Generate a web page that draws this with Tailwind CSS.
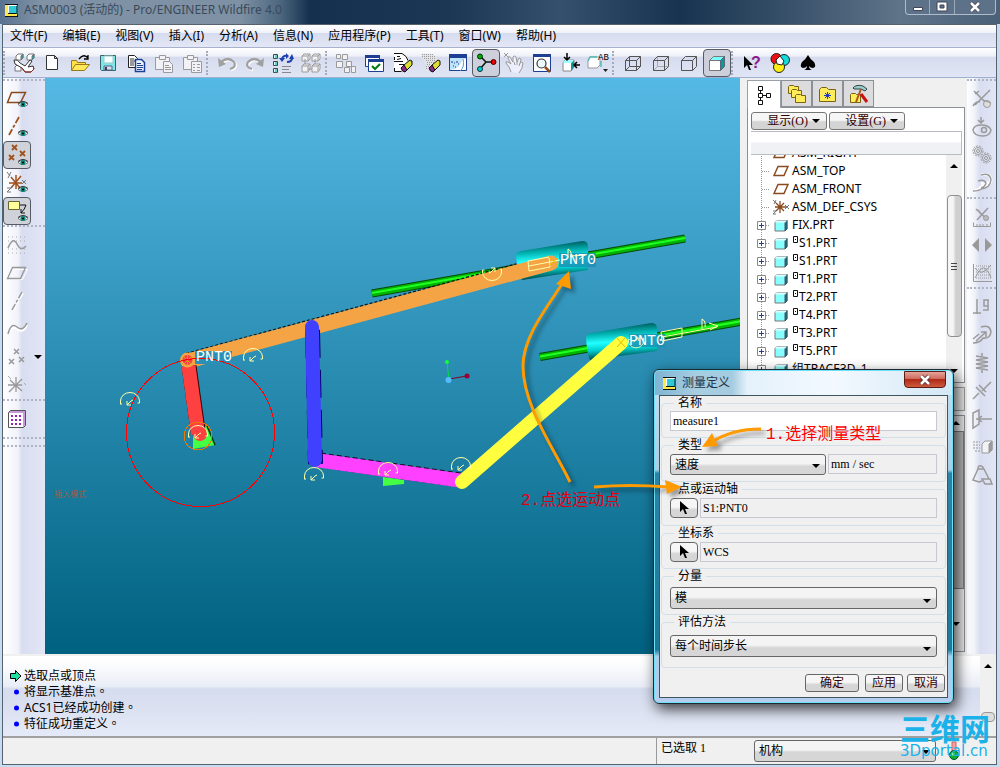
<!DOCTYPE html>
<html lang="zh-CN">
<head>
    <meta charset="UTF-8">
    <title>ASM0003 (活动的) - Pro/ENGINEER Wildfire 4.0</title>
    <meta name="viewport" content="width=device-width, initial-scale=1.0">
    <script src="https://cdn.jsdelivr.net/npm/@tailwindcss/browser@4"></script>
</head>
<body class="relative h-screen overflow-hidden flex flex-col bg-[#c6dcf0] text-xs text-black font-['Noto_Sans','Noto_Sans_CJK_TC',sans-serif]">

    <!-- 共用图形 -->
    <svg class="hidden">
        <defs>
            <symbol id="eye" viewBox="0 0 12 8">
                <path d="M1 4Q6-1 11 4Q6 8 1 4z" fill="#fff" stroke="#777"/>
                <path d="M1 3Q6-1 11 3" fill="none" stroke="#333"/>
                <circle cx="6" cy="4" r="2.6" fill="#0a8a80"/><circle cx="6" cy="4" r="1" fill="#000"/>
            </symbol>
            <symbol id="logo" viewBox="0 0 13 13">
                <path d="M0 0h13v13H0z" fill="#111"/><path d="M0 1h3v11H0zM1 10h11v2H1z" fill="#ffe94a"/>
                <path d="M3 1h9v8H3z" fill="#fff"/><path d="M4 2h7v7H4z" fill="#2fc9d6"/><path d="M11 2l2-1v10l-2-2z" fill="#0b6f7c"/>
            </symbol>
            <symbol id="cube" viewBox="0 0 14 13">
                <path d="M1 3.500l2-2h10v8.500l-2 2H1z" fill="#8ff" stroke="#777"/>
                <path d="M11 3.500l2-2v8.500l-2 2z" fill="#078" stroke="#456"/>
                <path d="M1 3.500l2-2h10l-2 2z" fill="#dff"/>
            </symbol>
            <symbol id="plane" viewBox="0 0 16 12"><path d="M5 1.500h10l-4 9H1z" fill="none" stroke="#8b4a1e" stroke-width="1.500"/></symbol>
            <symbol id="csys" viewBox="0 0 18 16">
                <path d="M3 8h11M8 2v12M4 4l8 8M12 4l-8 8" stroke="#8b4a1e" stroke-width="1.300"/>
                <path d="M1 1l3 3M4 1L2 5M13 6l4 4M17 6l-4 4M1 12h3l-3 3h3" stroke="#777" fill="none"/>
            </symbol>
            <symbol id="plus" viewBox="0 0 9 9"><path d="M.5.5h8v8h-8z" fill="#fff" stroke="#888"/><path d="M2 4.500h5M4.500 2v5" stroke="#25408c"/></symbol>
            <symbol id="down" viewBox="0 0 8 5"><path d="M0 0h8L4 4z" fill="#000"/></symbol>
            <symbol id="cursor" viewBox="0 0 10 14"><path d="M1 0v11l3-3 2 5h2l-2-5h4z" fill="#000"/></symbol>
            <g id="pin" fill="none" stroke="#ffffa8">
                <path d="M-10 3h2M-9.500 3V0A9.500 8.500 0 0 1 9.500 0V2h-2M-3 0v4h4M-3 4l4-4l2-1"/>
            </g>
        </defs>
    </svg>

    <!-- 标题栏 -->
    <header class="h-6 shrink-0 flex items-start pl-[5px] pr-1 bg-[linear-gradient(90deg,#587391_0%,#8093a6_4%,#7e91a4_24%,#4d6780_28%,#15304e_31%,#1c3754_45%,#35506c_56%,#17334f_68%,#3c546d_80%,#5f7489_90%,#4b6178_100%)]">
        <svg class="w-[13px] h-[13px] mt-1"><use href="#logo"/></svg>
        <h1 class="ml-1.5 leading-5 text-[12px] text-[#3a4a5a] whitespace-nowrap">ASM0003 (活动的) - Pro/ENGINEER Wildfire 4.0</h1>
        <div class="ml-auto flex h-[15px] border border-t-0 border-[#aebccb] rounded-b divide-x divide-[#9aaabb] bg-[#5d7188]">
            <button class="w-6 grid place-items-center" aria-label="最小化"><svg class="w-3 h-3"><path d="M1.500 6.500h9v3h-9z" fill="#fff" stroke="#445"/></svg></button>
            <button class="w-[25px] grid place-items-center" aria-label="最大化"><svg class="w-3 h-3"><path d="M1 1h10v9H1zM4 4v3h4V4z" fill="#fff" fill-rule="evenodd" stroke="#445"/></svg></button>
            <button class="w-10 grid place-items-center" aria-label="关闭"><svg class="w-3 h-3"><path d="M2 2l8 8M10 2l-8 8" stroke="#445" stroke-width="4"/><path d="M2 2l8 8M10 2l-8 8" stroke="#fff" stroke-width="2.500"/></svg></button>
        </div>
    </header>

    <div class="flex-1 min-h-0 mb-0.5 ml-0.5 mr-[3px] flex flex-col border border-[#56636f] bg-[#f0f0f0]">

        <!-- 菜单 -->
        <nav class="h-[23px] shrink-0 flex items-center gap-[15px] pl-[7px] border-b border-[#a9b2cc] bg-[linear-gradient(180deg,#fff_0%,#f1f3fa_34%,#d6dbee_36%,#e3e7f6_100%)] whitespace-nowrap">
            <button>文件(F)</button>
            <button>编辑(E)</button>
            <button>视图(V)</button>
            <button>插入(I)</button>
            <button>分析(A)</button>
            <button>信息(N)</button>
            <button>应用程序(P)</button>
            <button>工具(T)</button>
            <button>窗口(W)</button>
            <button>帮助(H)</button>
        </nav>

        <!-- 工具栏 -->
        <div class="h-[30px] shrink-0 flex items-center border-b border-[#9fb0cf] bg-[linear-gradient(180deg,#fff_0%,#eef0f8_28%,#d6dbee_32%,#e1e6f6_100%)]">
            <i class="w-[7px] h-6 border-l-2 border-dotted border-[#a5abbc]"></i>
            <button class="w-7 h-7 grid place-items-center" aria-label="选取"><svg class="w-6 h-6" fill="#fff" stroke="#777"><path d="M4 5l2-2h5v4l-2 2H4z"/><path d="M9 5v4l2-2V3z" fill="#0aa"/><path d="M15 5l2-2h5v4l-2 2h-5z"/><path d="M20 5v4l2-2V3z" fill="#0aa"/><path d="M3 16l2-2h4v6H3z"/><path d="M2 9q4-1 6 3l5 3 5-6 2 1-4 6 5-1 1 3-3 3h-6l-3-4-7-4z" stroke="#333"/><path d="M10 17l3 4h6l3-3-1-3" fill="none" stroke="#922"/></svg></button>
            <button class="w-7 h-7 grid place-items-center" aria-label="新建"><svg class="w-6 h-6"><path d="M6.500 4.500h8l3 3v11h-11zM14.500 4.500v3h3" fill="#fff" stroke="#333"/></svg></button>
            <button class="w-7 h-7 grid place-items-center" aria-label="打开"><svg class="w-6 h-6"><path d="M3.500 19V9.500h5l1 2h8V14" fill="#ffe04a" stroke="#997a1a"/><path d="M3.500 19.500l4-6h14l-5 6z" fill="#ffe85a" stroke="#997a1a"/><path d="M11 8q5-6 9-1M20 4v4h-4" fill="none" stroke="#000" stroke-width="1.300"/></svg></button>
            <button class="w-7 h-7 grid place-items-center" aria-label="保存"><svg class="w-6 h-6"><path d="M4.500 4.500h15v15h-14l-1-1z" fill="#7ee6ea" stroke="#3b6468"/><path d="M8 5h9v7H8z" fill="#f4ffff" stroke="#9cc"/><path d="M8 15h8v4H8z" fill="#dde" stroke="#568"/><path d="M9 16h2v3H9z" fill="#345"/></svg></button>
            <button class="w-7 h-7 grid place-items-center" aria-label="复制"><svg class="w-6 h-6"><path d="M4.500 4.500h6l3 3v9h-9z" fill="#fff" stroke="#222"/><path d="M6 8h4M6 10h5M6 12h4M6 14h4" stroke="#333"/><path d="M11.500 8.500h6l3 3v9h-9z" fill="#eef4ff" stroke="#1c3f94" stroke-width="1.500"/><path d="M13 12.500h4M13 14.500h6M13 16.500h6M13 18.500h5" stroke="#1c3f94"/></svg></button>
            <button class="w-7 h-7 grid place-items-center" aria-label="粘贴"><svg class="w-6 h-6" fill="#f2f2f6" stroke="#9a9a9a"><path d="M3.500 6.500h14v12h-14z"/><path d="M7.500 4.500h6v4h-6z"/><path d="M11.500 10.500h6l3 3v8h-9z"/><path d="M13 14.500h4M13 16.500h6M13 18.500h6"/></svg></button>
            <button class="w-7 h-7 grid place-items-center" aria-label="选择性粘贴"><svg class="w-6 h-6" fill="#f2f2f6" stroke="#9a9a9a"><path d="M3.500 6.500h14v12h-14z"/><path d="M7.500 4.500h6v4h-6z"/><path d="M11.500 10.500h10v11h-10z"/><path d="M13 13.500h2M17 13.500h3M13 16.500h2M17 16.500h3M13 19.500h2M17 19.500h3"/></svg></button>
            <i class="w-[7px] h-6 border-l-2 border-dotted border-[#a5abbc]"></i>
            <button class="w-7 h-7 grid place-items-center" aria-label="撤消"><svg class="w-6 h-6"><path d="M6 11q7-6 13 0q3 5-4 7" fill="none" stroke="#fff" stroke-width="2.500" transform="translate(1 1)"/><path d="M6 11q7-6 13 0q3 5-4 7" fill="none" stroke="#a0a0a0" stroke-width="2.200"/><path d="M3 7l1 9 7-3z" fill="#a0a0a0"/></svg></button>
            <button class="w-7 h-7 grid place-items-center" aria-label="重做"><svg class="w-6 h-6"><path d="M18 11q-7-6-13 0q-3 5 4 7" fill="none" stroke="#fff" stroke-width="2.500" transform="translate(1 1)"/><path d="M18 11q-7-6-13 0q-3 5 4 7" fill="none" stroke="#a0a0a0" stroke-width="2.200"/><path d="M21 7l-1 9-7-3z" fill="#a0a0a0"/></svg></button>
            <button class="w-7 h-7 grid place-items-center" aria-label="再生"><svg class="w-6 h-6"><path d="M2.500 3.500h4v4h-4zM2.500 10.500h4v4h-4zM2.500 17.500h4v4h-4z" fill="#cff" stroke="#444"/><path d="M5 4v4M5 11v4M5 18v4" stroke="#0a9a8a"/><path d="M11 8q1-4 5-3M21 7q0 4-5 4" fill="none" stroke="#1c3fb4" stroke-width="2"/><path d="M8 7h6l-3 4zM18 8h5l-2-5zM15 2l3 3-3 3z" fill="#1c3fb4"/><path d="M11 15.500h9M11 18.500h7M11 21.500h9" stroke="#888"/></svg></button>
            <button class="w-7 h-7 grid place-items-center" aria-label="再生管理器"><svg class="w-6 h-6" fill="#f2f2f6" stroke="#9a9a9a"><path d="M3 5l2-2h6v5l-2 2H3zM13 5l2-2h6v5l-2 2h-6zM3 15l2-2h6v5l-2 3H3zM13 15l2-2h6v5l-2 3h-6z"/><path d="M3 5h6v5M9 5l2-2M13 5h6v5M19 5l2-2M3 15h6v5M9 15l2-2M13 15h6v5M19 15l2-2M6 8v5M16 8v5M9 18h4" fill="none"/></svg></button>
            <i class="w-[7px] h-6 border-l-2 border-dotted border-[#a5abbc]"></i>
            <button class="w-7 h-7 grid place-items-center" aria-label="查找"><svg class="w-6 h-6" fill="#f2f2f6" stroke="#9a9a9a"><path d="M2.500 3.500h4v4h-4zM8.500 3.500h5v5h-5zM2.500 10.500h6v6h-6zM12.500 10.500h5v5h-5zM10.500 16.500h5v5h-5zM17.500 15.500h4v6h-4z"/></svg></button>
            <button class="w-7 h-7 grid place-items-center" aria-label="窗口激活"><svg class="w-6 h-6"><path d="M3.500 4.500h14v11h-14z" fill="#fff" stroke="#1c3f94"/><path d="M3 4h15v3H3z" fill="#1c3f94"/><path d="M6.500 8.500h15v12h-15z" fill="#fff" stroke="#1c3f94"/><path d="M6 8h16v3H6z" fill="#1c3f94"/><path d="M10 15l3 3 5-5" fill="none" stroke="#0a7a1a" stroke-width="2.200"/></svg></button>
            <button class="w-7 h-7 grid place-items-center" aria-label="重画"><svg class="w-6 h-6"><path d="M4 2h9l4 4v4L11 21H4z" fill="#fff"/><path d="M4 2.500h8l4 3 2 4M4.500 9v-3M4.500 17v3.500h7M7 5.500h3M7 8.500l4-1M4 10.500h9M9 13.500h5" fill="none" stroke="#111"/><path d="M11 17l3-3 4 4-3 3q-3 0-4-4z" fill="#8a2a8a" stroke="#111"/><path d="M14 14l6-5 2 1v4l-5 5z" fill="#dd3" stroke="#111"/><path d="M20 9l2 1v3z" fill="#262"/></svg></button>
            <button class="w-7 h-7 grid place-items-center" aria-label="清除"><svg class="w-6 h-6"><path d="M3 3h12l4 5v2L9 21H7l1-6z" fill="#e4e4e8"/><path d="M4 3.500h11M4 5.500h13M6 7.500h12M8 9.500h10M9 11.500h7M9 13.500h4M8 15.500h3M8 17.500h2" stroke="#999" stroke-dasharray="1 1"/><path d="M11 17l3-3 4 4-3 3q-3 0-4-4z" fill="#8a2a8a" stroke="#111"/><path d="M14 14l6-5 2 1v4l-5 5z" fill="#dd3" stroke="#111"/></svg></button>
            <button class="w-7 h-7 grid place-items-center" aria-label="旋转中心"><svg class="w-6 h-6"><path d="M3.500 3.500h17v16h-17z" fill="#bfe4fa" stroke="#1c3f94"/><path d="M3 3h18v4H3z" fill="#1c3f94"/><path d="M4 19Q13 19 17 8h3v11z" fill="#fff"/><path d="M5 11h2M8 12h1M10 11h2M7 15h1M12 13h1M9 16h1" stroke="#1c3f94"/><path d="M14 20q5-4 3-12" fill="none" stroke="#59c"/></svg></button>
            <button class="w-7 h-7 grid place-items-center border border-[#555a66] rounded bg-[#cdd0da]" aria-label="方向模式"><svg class="w-6 h-6"><path d="M6 5l6 6h8M12 11l-6 7" fill="none" stroke="#111" stroke-width="1.500"/><circle cx="6" cy="5.500" r="2.500" fill="#0a0" stroke="#031"/><circle cx="19.500" cy="11" r="2.500" fill="#e00" stroke="#400"/><circle cx="6" cy="18" r="2.500" fill="#0cc" stroke="#033"/></svg></button>
            <button class="w-7 h-7 grid place-items-center" aria-label="拖动"><svg class="w-6 h-6" stroke="#9a9a9a" fill="#eef"><path d="M2 2l4 4M6 2L2 6"/><path d="M9 21l-2-5-3-4q-1-2 2-1l3 2-3-6q0-2 2-1l3 5 0-5q1-2 3 0l1 5 2-4q2 0 2 2l-1 3q2-2 3 0l-1 5-3 5"/><path d="M12 11l1 3M15 11v3M18 12l-1 3"/></svg></button>
            <button class="w-7 h-7 grid place-items-center" aria-label="放大"><svg class="w-6 h-6"><path d="M3.500 3.500h17v17h-17z" fill="#fff" stroke="#1c3f94"/><path d="M3 3h18v3H3z" fill="#1c3f94"/><circle cx="11.500" cy="12.500" r="4.500" fill="#eef8ff" stroke="#333" stroke-width="1.200"/><path d="M15 16l5 5" stroke="#964b1e" stroke-width="2.500"/></svg></button>
            <button class="w-7 h-7 grid place-items-center" aria-label="重新调整"><svg class="w-6 h-6"><path d="M5 12l2-3h9v7l-3 4H5z" fill="#fff" stroke="#888"/><path d="M13 12v8l3-4V9z" fill="#0a9a9a"/><path d="M5 12l2-3h9l-3 3z" fill="#9ff"/><path d="M9 2v7M6 6l3 3 3-3M22 14h-6M19 11l-3 3 3 3" fill="none" stroke="#000" stroke-width="1.500"/></svg></button>
            <button class="w-7 h-7 grid place-items-center" aria-label="已命名的视图"><svg class="w-6 h-6"><path d="M2 10l2-4h10v8l-3 3H2z" fill="#fff" stroke="#999"/><path d="M2 10l2-4h7M15 10v6" fill="none" stroke="#5bb" stroke-width="1.500"/><path d="M17 18h5l-2.500 3z" fill="#222"/><text x="12" y="9" font-family="Liberation Mono" font-size="9" fill="#000">AB</text></svg></button>
            <i class="w-[7px] h-6 border-l-2 border-dotted border-[#a5abbc]"></i>
            <button class="w-7 h-7 grid place-items-center" aria-label="线框"><svg class="w-6 h-6"><path d="M4.500 9.500h11v10h-11zM8.500 5.500h11v10h-11zM4.500 9.500l4-4M15.500 9.500l4-4M15.500 19.500l4-4M4.500 19.500l4-4" fill="none" stroke="#555"/></svg></button>
            <button class="w-7 h-7 grid place-items-center" aria-label="隐藏线"><svg class="w-6 h-6"><path d="M8.500 5.500v10h11M4.500 19.500l4-4" fill="none" stroke="#aaa"/><path d="M4.500 9.500h11v10h-11zM4.500 9.500l4-4h11v10l-4 4M15.500 9.500l4-4" fill="none" stroke="#555"/></svg></button>
            <button class="w-7 h-7 grid place-items-center" aria-label="消隐"><svg class="w-6 h-6"><path d="M4.500 9.500h11v10h-11zM4.500 9.500l4-4h11v10l-4 4M15.500 9.500l4-4" fill="none" stroke="#555"/></svg></button>
            <button class="w-7 h-7 grid place-items-center border border-[#555a66] rounded bg-[#cdd0da]" aria-label="着色"><svg class="w-6 h-6"><path d="M4.500 9.500h11v10h-11z" fill="#fff" stroke="#777"/><path d="M4.500 9.500l4-4h11l-4 4z" fill="#7ff" stroke="#777"/><path d="M15.500 9.500l4-4v10l-4 4z" fill="#0a9a9a" stroke="#567"/></svg></button>
            <i class="w-[7px] h-6 border-l-2 border-dotted border-[#a5abbc]"></i>
            <button class="w-7 h-7 grid place-items-center" aria-label="帮助"><svg class="w-6 h-6"><path d="M4 5v12l3-3 2 5h2l-2-5h4z" fill="#000"/><text x="11" y="17" font-family="Liberation Sans" font-weight="bold" font-size="16" fill="#8a1a8a">?</text></svg></button>
            <button class="w-7 h-7 grid place-items-center" aria-label="颜色"><svg class="w-6 h-6" stroke="#222"><circle cx="8.500" cy="8" r="5.500" fill="#e11"/><circle cx="16" cy="9" r="5.500" fill="#1dd"/><circle cx="11" cy="16" r="5.500" fill="#fe1"/><path d="M8 9l4-4 4 5-2 4-5-1z" fill="#fff"/></svg></button>
            <button class="w-7 h-7 grid place-items-center" aria-label="黑桃"><svg class="w-6 h-6"><path d="M12 4q2 4 6 7q3 5-1 6q-3 0-4-2q0 3 3 4H8q3-1 3-4q-1 2-4 2q-4-1-1-6q4-3 6-7z" fill="#000"/></svg></button>
        </div>

        <main class="flex-1 min-h-0 flex">

            <!-- 基准工具栏 -->
            <div class="w-[42px] shrink-0 flex flex-col bg-[linear-gradient(90deg,#fff_0%,#f1f3fa_35%,#d8ddf0_45%,#e2e6f6_100%)]">
                <i class="h-1.5 shrink-0 mt-px border-t-2 border-dotted border-[#b0b5c4]"></i>
                <button class="w-7 h-7 shrink-0 grid place-items-center" aria-label="基准平面显示"><svg class="w-6 h-6"><path d="M6.500 5.500h14l-5 10H2.500z" fill="none" stroke="#8b4a1e" stroke-width="1.500"/><use href="#eye" x="12" y="13" width="12" height="9"/></svg></button>
                <button class="w-7 h-7 shrink-0 grid place-items-center" aria-label="基准轴显示"><svg class="w-6 h-6"><path d="M14 2L4 20" stroke="#a0521e" stroke-width="1.800" stroke-dasharray="7 2 3 2"/><use href="#eye" x="12" y="14" width="12" height="9"/></svg></button>
                <button class="w-7 h-7 shrink-0 grid place-items-center border border-[#555a66] rounded bg-[#d0d2da]" aria-label="基准点显示"><svg class="w-6 h-6"><path d="M7 2l5 5M12 2L7 7M4 12l5 5M9 12l-5 5M15 8l5 5M20 8l-5 5" stroke="#a0521e" stroke-width="1.800"/><use href="#eye" x="12" y="15" width="12" height="9"/></svg></button>
                <button class="w-7 h-7 shrink-0 grid place-items-center" aria-label="坐标系显示"><svg class="w-6 h-6"><path d="M4 12h13M11 4v14M6 6l9 11M16 5L6 17" stroke="#a0521e" stroke-width="1.500"/><path d="M2 1l3 4M6 1L3 7M17 9l4 4M21 9l-4 4M2 17h4l-4 4h4" stroke="#777" fill="none"/><use href="#eye" x="12" y="14" width="12" height="9"/></svg></button>
                <button class="w-7 h-7 shrink-0 grid place-items-center border border-[#555a66] rounded bg-[#d0d2da]" aria-label="注释显示"><svg class="w-6 h-6"><path d="M3.500 2.500h11v8h-11z" fill="#ffff9a" stroke="#663"/><path d="M15 6h6q-1 4-5 8M16 10v4h4" fill="none" stroke="#111"/><use href="#eye" x="12" y="15" width="12" height="9"/></svg></button>
                <i class="h-1.5 shrink-0 border-t-2 border-dotted border-[#b0b5c4]"></i>
                <button class="w-7 h-7 shrink-0 grid place-items-center" aria-label="草绘"><svg class="w-6 h-6" fill="none" stroke="#aaa"><path d="M3 4h18M3 8h18M3 16h18M3 20h18" stroke-dasharray="1 3"/><path d="M3 15q5-12 9-4t9 2" stroke="#999" stroke-width="1.500"/></svg></button>
                <button class="w-7 h-7 shrink-0 grid place-items-center" aria-label="平面"><svg class="w-6 h-6" fill="none"><path d="M8.500 8.500h14l-5 10H4" stroke="#fff"/><path d="M7.500 6.500h13l-5 11h-13z" stroke="#999" stroke-width="1.300"/></svg></button>
                <button class="w-7 h-7 shrink-0 grid place-items-center" aria-label="轴"><svg class="w-6 h-6"><path d="M18 4L8 22" stroke="#fff" stroke-width="2" stroke-dasharray="7 2 3 2"/><path d="M17 3L7 21" stroke="#999" stroke-width="1.500" stroke-dasharray="7 2 3 2"/></svg></button>
                <button class="w-7 h-7 shrink-0 grid place-items-center" aria-label="曲线"><svg class="w-6 h-6" fill="none"><path d="M3 19q3-12 9-7t10-4" stroke="#fff" stroke-width="2" /><path d="M3 17q3-12 9-7t10-4" stroke="#999" stroke-width="1.500"/></svg></button>
                <div class="flex items-center h-7 shrink-0">
                    <button class="w-7 h-7 grid place-items-center" aria-label="点"><svg class="w-6 h-6"><path d="M9 4l5 5M14 4L9 9M4 14l5 5M9 14l-5 5M14 12l5 5M19 12l-5 5" stroke="#999" stroke-width="1.500"/></svg></button>
                    <button class="w-3.5 grid place-items-center" aria-label="更多点工具"><svg class="w-2 h-[5px]"><use href="#down"/></svg></button>
                </div>
                <button class="w-7 h-7 shrink-0 grid place-items-center" aria-label="坐标系"><svg class="w-6 h-6"><path d="M3 12h14M11 4v15M5 7l12 11M17 6L4 19" stroke="#999" stroke-width="1.300"/><path d="M3 3l3 3M19 10l2 2" stroke="#aaa"/></svg></button>
                <i class="h-1.5 shrink-0 border-t-2 border-dotted border-[#b0b5c4]"></i>
                <button class="w-7 h-7 shrink-0 grid place-items-center" aria-label="分析特征"><svg class="w-6 h-6"><path d="M3.500 5.500l2-2h15v15l-2 2h-15z" fill="#c79ad8" stroke="#555"/><path d="M4 6h14v14H4z" fill="#fff"/><path d="M6 9h11M6 13h11M6 17h11" stroke="#92b" stroke-width="2" stroke-dasharray="2 2"/></svg></button>
                <i class="h-2 shrink-0 mt-1 border-t-2 border-dotted border-[#b0b5c4]"></i>
                <i class="h-1.5 shrink-0 border-t-2 border-dotted border-[#b0b5c4]"></i>
            </div>

            <!-- 图形窗口 -->
            <section class="flex-1 min-w-0 bg-[linear-gradient(180deg,#55b9e5_0%,#006180_100%)]">
                <svg class="w-full h-full block" viewBox="45 78 695 577" preserveAspectRatio="xMinYMin slice">
                    <defs>
                        <linearGradient id="tube" x1="0" y1="0" x2=".12" y2="1">
                            <stop offset=".08" stop-color="#055"/><stop offset=".3" stop-color="#0aa"/><stop offset=".55" stop-color="#2ff"/><stop offset=".75" stop-color="#0cc"/><stop offset="1" stop-color="#044"/>
                        </linearGradient>
                    </defs>
                    <!-- 导轨与滑块 -->
                    <g fill="none">
                        <path d="M372 293.500L685 238.500M540 357L745 321" stroke="#064a06" stroke-width="8"/>
                        <path d="M372 293.500L685 238.500M540 357L745 321" stroke="#00b400" stroke-width="6"/>
                        <path d="M372 293L685 238M540 356.500L745 320.500" stroke="#2f2" stroke-width="2"/>
                    </g>
                    <path d="M516 256q0-4 5-5l61-10q6 0 6 5v24l-66 10q-4-6-6-24z" fill="url(#tube)"/>
                    <path d="M586 338q0-4 5-5l60-10q6 0 6 5v23l-67 9q-3-6-4-22z" fill="url(#tube)"/>
                    <!-- 连杆 -->
                    <path d="M188 360L518 270.500" stroke="#111" stroke-width="15" stroke-dasharray="3 2"/>
                    <path d="M188 361L551 263" stroke="#f4a444" stroke-width="15" stroke-linecap="round"/>
                    <path d="M195 351h37v13h-37z" fill="#2b8fb6"/>
                    <path d="M193 430l14-4 8 19-22 4z" fill="#4f4"/><path d="M207 426l8 19" stroke="#053805" stroke-width="1.500"/>
                    <path d="M189 366L198.500 434" stroke="#300" stroke-width="15"/>
                    <path d="M188.500 366L198 434" stroke="#ff4040" stroke-width="14"/>
                    <circle cx="187.500" cy="360" r="7.500" fill="#f4a444"/><circle cx="187.500" cy="360" r="5" fill="#ff4040"/>
                    <path d="M184 357l7 7M191 357l-7 7M187.500 355v10" stroke="#d8a010"/>
                    <circle cx="200" cy="434" r="7" fill="#ff4040"/>
                    <circle cx="198" cy="436" r="14" fill="none" stroke="#e87800" shape-rendering="crispEdges"/>
                    <circle cx="200.500" cy="432.500" r="74" fill="none" stroke="#ff0000" shape-rendering="crispEdges"/>
                    <path d="M383 477l21 3v4l-21 2z" fill="#4f4"/>
                    <path d="M320 460L460 480" stroke="#202" stroke-width="15" stroke-dasharray="5 3"/>
                    <path d="M316 460L460 480.500" stroke="#ff40ff" stroke-width="14"/>
                    <path d="M312.500 330L315.500 464" stroke="#006" stroke-width="15" stroke-dasharray="28 12"/>
                    <path d="M312 327L315 460" stroke="#4040ff" stroke-width="14" stroke-linecap="round"/>
                    <path d="M462 482L621 343" stroke="#ffff40" stroke-width="14" stroke-linecap="round"/>
                    <path d="M559 253h37v14h-37z" fill="#1c8fb4" fill-opacity=".8"/><path d="M629 334h36v13h-36z" fill="#1c8fb4" fill-opacity=".8"/>
                    <!-- 接头标记 -->
                    <use href="#pin" x="253" y="357"/><use href="#pin" x="130" y="401"/><use href="#pin" x="198" y="434"/>
                    <use href="#pin" x="314" y="476"/><use href="#pin" x="388" y="471"/><use href="#pin" x="461" y="466"/>
                    <use href="#pin" transform="translate(492 272) rotate(180)"/><use href="#pin" transform="translate(636 341) scale(.8) rotate(180)"/>
                    <g fill="none" stroke="#ffffa8">
                        <path d="M528 261l21-4 1 10-21 4zM529 266l31-6M661 332l21-4v9l-20 4zM662 337l55-10M709 323l9 3-8 4M702 329v-10q4 2 3 8M568 258v-9q4 2 3 8M571 256l14-1-6 4"/>
                    </g>
                    <path d="M549 257l9 9M558 257l-9 9M617 338l8 9M625 338l-8 9" stroke="#e8b800"/>
                    <g font-family="Liberation Mono" font-size="15" fill="#fff">
                        <text x="196" y="361">PNT0</text>
                        <text x="560" y="264">PNT0</text>
                        <text x="629" y="345">PNT0</text>
                    </g>
                    <!-- 坐标轴 -->
                    <path d="M447 362L449 380" stroke="#0d4"/><path d="M449 379L467 376" stroke="#802"/>
                    <circle cx="447" cy="362" r="2" fill="#1f3"/><circle cx="467" cy="376" r="2.500" fill="#903"/><circle cx="448.500" cy="380" r="3" fill="#5bf"/>
                    <text x="54" y="497" font-size="8" fill="#b0563a" font-family="Noto Sans CJK SC">插入模式</text>
                </svg>
            </section>

            <!-- 模型树 -->
            <aside class="w-[227px] shrink-0 flex flex-col pl-[7px] pr-0.5 pt-0.5 bg-[#f0f0f0]">
                <div class="h-[27px] shrink-0 flex items-end pr-2 relative z-10">
                    <button class="w-[34px] h-[28px] -mb-px shrink-0 grid place-items-center bg-white border border-b-0 border-[#9aa0aa]" aria-label="模型树"><svg class="w-5 h-5" fill="none" stroke="#111"><path d="M4.500 1.500h4v4h-4zM4.500 8.500h4v4h-4zM4.500 15.500h4v4h-4zM12.500 8.500h4v4h-4zM6.500 6v2M6.500 13v2M9 10.500h3"/></svg></button>
                    <button class="w-[31px] h-[27px] shrink-0 grid place-items-center bg-[#dcdcde] border border-[#8b8f96]" aria-label="文件夹浏览器"><svg class="w-5 h-5" fill="#ffec5a" stroke="#7a6410"><path d="M1.500 2.500l1-1h4l1 1h4v7h-10z"/><path d="M4.500 6.500l1-1h4l1 1h4v7h-10z"/><path d="M8.500 11.500l1-1h4l1 1h4v7h-10z"/></svg></button>
                    <button class="w-[31px] h-[27px] shrink-0 grid place-items-center bg-[#dcdcde] border border-[#8b8f96]" aria-label="收藏夹"><svg class="w-5 h-5"><path d="M1.500 5.500l2-2h5l2 2h7v12h-16z" fill="#ffec5a" stroke="#7a6410"/><path d="M9.500 8v7M6 11.500h7M7 9l5 5M12 9l-5 5" stroke="#1c3fb4"/></svg></button>
                    <button class="w-[31px] h-[27px] shrink-0 grid place-items-center bg-[#dcdcde] border border-[#8b8f96]" aria-label="连接"><svg class="w-5 h-5"><path d="M1.500 10.500l1-1h4l1 1h4v8h-10z" fill="#ffec5a" stroke="#7a6410"/><path d="M4 4q3-4 10-2l4 3-2 2-4-2H5z" fill="#9cc" stroke="#344"/><path d="M12 5l-5 13" stroke="#a52" stroke-width="2"/><path d="M12 10l6 8" stroke="#c11" stroke-width="3"/></svg></button>
                </div>
                <div class="h-[276px] shrink-0 flex flex-col pl-[3px] pr-0.5 pt-1 bg-white border border-[#8b8f96]">
                    <div class="flex gap-0.5 h-[18px] shrink-0">
                        <button class="w-[76px] flex items-center justify-end gap-1 pr-1.5 border border-[#777] rounded-[3px] bg-[linear-gradient(180deg,#f6f6f6_45%,#d4d4d4_55%)] text-[#300] font-['Liberation_Serif','Noto_Sans_CJK_SC',serif]">显示(O) <svg class="w-2 h-[5px]"><use href="#down"/></svg></button>
                        <button class="w-[76px] flex items-center justify-end gap-1 pr-1.5 border border-[#777] rounded-[3px] bg-[linear-gradient(180deg,#f6f6f6_45%,#d4d4d4_55%)] text-[#300] font-['Liberation_Serif','Noto_Sans_CJK_SC',serif]">设置(G) <svg class="w-2 h-[5px]"><use href="#down"/></svg></button>
                    </div>
                    <div class="h-6 mt-px shrink-0 border border-[#b9bcc2] border-l-0 bg-[linear-gradient(180deg,#fff_45%,#f0f1f4_50%)]"></div>
                    <div class="flex-1 min-h-0 flex">
                        <ul id="tree" class="flex-1 overflow-hidden"></ul>
                        <div class="w-4 shrink-0 flex flex-col items-center bg-[#f0f0f0]">
                            <svg class="w-2 h-[5px] mt-2 rotate-180"><use href="#down"/></svg>
                            <div class="w-[15px] h-[142px] mt-[27px] grid place-items-center border border-[#909090] rounded-sm bg-[linear-gradient(90deg,#f5f5f5_40%,#cfcfd2_60%)]"><svg class="w-2 h-2"><path d="M1 1.500h6M1 4.500h6M1 7.500h6" stroke="#444"/></svg></div>
                            <svg class="w-2 h-[5px] mt-8"><use href="#down"/></svg>
                        </div>
                    </div>
                </div>
                <div class="h-6 my-1 shrink-0 border border-[#9a9a9a] bg-[#e4e4e4]"></div>
                <div class="flex-1 min-h-0 mb-0.5 flex justify-end border border-[#8b8f96] bg-white">
                    <div class="w-4 flex flex-col items-center pt-1 pb-6 bg-[#e8e8e8]">
                        <svg class="w-2 h-[5px] rotate-180"><use href="#down"/></svg>
                        <div class="w-[15px] h-[158px] mt-1.5 border border-[#777] bg-[#b5b5b5]"></div>
                        <svg class="w-2 h-[5px] mt-auto"><use href="#down"/></svg>
                    </div>
                </div>
            </aside>

            <!-- 机构工具栏 -->
            <div class="w-[29px] shrink-0 flex flex-col bg-[linear-gradient(90deg,#fff_0%,#f1f3fa_25%,#d8ddf0_45%,#e2e6f6_100%)]">
                <i class="h-1.5 shrink-0 mt-px border-t-2 border-dotted border-[#b0b5c4]"></i>
                <button class="h-7 shrink-0 grid place-items-center" aria-label="机构显示"><svg class="w-6 h-6" fill="none" stroke="#9a9a9a"><path d="M4 4l15 15M20 3L5 18M3 19q3-5 7-4M5 7l4-3" stroke-width="1.500"/><circle cx="17" cy="17" r="3.500" fill="#ddd"/><path d="M13 13l8 3M6 5l3 4" /></svg></button>
                <button class="h-7 shrink-0 grid place-items-center" aria-label="凸轮"><svg class="w-6 h-6" fill="none" stroke="#9a9a9a" stroke-width="1.500"><path d="M3 15q1-5 8-5 8 0 10 5-1 6-8 6-9 0-10-6z"/><circle cx="14" cy="15" r="2.500"/><path d="M11 2v6M8 5l3 3 3-3"/></svg></button>
                <button class="h-7 shrink-0 grid place-items-center" aria-label="齿轮"><svg class="w-6 h-6" fill="none" stroke="#9a9a9a"><circle cx="8" cy="8" r="5" stroke-dasharray="2 1"/><circle cx="8" cy="8" r="3.500"/><circle cx="8" cy="8" r="1.500"/><circle cx="16" cy="15" r="5" stroke-dasharray="2 1"/><circle cx="16" cy="15" r="3.500"/><circle cx="16" cy="15" r="1.500"/></svg></button>
                <button class="h-7 shrink-0 grid place-items-center" aria-label="伺服电动机"><svg class="w-6 h-6" fill="none"><path d="M11 4q9-3 10 5-1 7-10 3M3 20q6 0 8-4 5-1 8-5" stroke="#fff" stroke-width="3"/><path d="M11 4q9-3 10 5-1 8-10 9M3 20q6 0 8-2M8 10q6-2 8 2-1 4-5 5" stroke="#9a9a9a" stroke-width="1.500"/></svg></button>
                <i class="h-1.5 shrink-0 border-t-2 border-dotted border-[#b0b5c4]"></i>
                <button class="h-7 shrink-0 grid place-items-center" aria-label="机构分析"><svg class="w-6 h-6" fill="none" stroke="#9a9a9a"><path d="M6 4l12 11M18 3L7 15M8 5l3 4" stroke-width="1.500"/><circle cx="16" cy="13" r="2.500" fill="#bbb"/><path d="M3.500 17.500v4h17v-4M7 19v2M10 19v2M13 19v2M17 19v2"/></svg></button>
                <button class="h-7 shrink-0 grid place-items-center" aria-label="回放"><svg class="w-6 h-6"><path d="M9 5v14l-7-7zM15 5v14l7-7z" fill="#999"/></svg></button>
                <button class="h-7 shrink-0 grid place-items-center" aria-label="测量"><svg class="w-6 h-6" fill="none" stroke="#9a9a9a"><path d="M3.500 3v17.500H22"/><path d="M6 5h15M6 8h15M6 11h15M6 14h15M6 17h15" stroke-dasharray="1 1"/><path d="M5 17q7-14 11-9t5 9M5 7q6 10 16-3"/></svg></button>
                <i class="h-1.5 shrink-0 border-t-2 border-dotted border-[#b0b5c4]"></i>
                <button class="h-7 shrink-0 grid place-items-center" aria-label="重力"><svg class="w-6 h-6" fill="none" stroke="#9a9a9a" stroke-width="1.500"><path d="M7 4v15M3 18h8M19 5h-5v6h4V5v10h-5"/></svg></button>
                <button class="h-7 shrink-0 grid place-items-center" aria-label="执行电动机"><svg class="w-6 h-6" fill="none" stroke="#9a9a9a" stroke-width="1.500"><path d="M11 4q9-3 10 5-1 7-8 6M3 20q7 0 10-5M6 18l10-9M11 9h5v5M3 16l6-5"/></svg></button>
                <button class="h-7 shrink-0 grid place-items-center" aria-label="弹簧"><svg class="w-6 h-6" fill="none" stroke="#9a9a9a" stroke-width="1.500"><path d="M12 2v3M6 5l12 2-12 2 12 2-12 2 12 2-12 2 12 2M12 19v3"/></svg></button>
                <button class="h-7 shrink-0 grid place-items-center" aria-label="阻尼器"><svg class="w-6 h-6" fill="none" stroke="#9a9a9a" stroke-width="1.500"><path d="M3 20l6-6M14 10l7-7M6 8l9 9M9 6l7 7M12 12l4-4"/></svg></button>
                <button class="h-7 shrink-0 grid place-items-center" aria-label="力"><svg class="w-6 h-6" fill="none" stroke="#9a9a9a" stroke-width="1.500"><path d="M3 6l6-3v14l-6 4zM6 12h16M12 9l-4 3 4 3"/></svg></button>
                <button class="h-7 shrink-0 grid place-items-center" aria-label="初始条件"><svg class="w-6 h-6" fill="none" stroke="#9a9a9a"><path d="M3 7h7M3 10h7M3 13h7M5 16h6" stroke-dasharray="2 1"/><path d="M12 9l3-3h7v9l-3 3h-7z" fill="#f2f2f6"/><path d="M19 9l3-3v9l-3 3z" fill="#999"/></svg></button>
                <button class="h-7 shrink-0 grid place-items-center" aria-label="质量属性"><svg class="w-6 h-6" fill="none" stroke="#9a9a9a" stroke-width="1.500"><path d="M8 6h6l5 10M8 6L3 17l6 2 3-1M8 6q0-4 3-3t2 3M12 16h8l2 5h-7z"/></svg></button>
            </div>
        </main>

        <!-- 消息区 -->
        <div class="h-[82px] mt-0.5 shrink-0 flex border-b-2 border-[#a0a0a0] bg-[linear-gradient(180deg,#fff_0%,#fbfcfd_12%,#e9edf6_38%,#d5dcee_41%,#dbe1f1_65%,#e5eaf8_100%)]">
            <ul lang="zh-Hant" class="flex-1 pt-3 pl-[7px] leading-4">
                <li class="flex items-center gap-0.5"><svg class="w-3 h-3"><path d="M.5 3.500h5V.5L11 6l-5.500 5.500v-3h-5z" fill="#1fe0a0" stroke="#000"/></svg>选取点或顶点</li>
                <li class="flex items-center gap-0.5"><svg class="w-3 h-3"><circle cx="6.500" cy="6" r="2.500" fill="#00f"/></svg>将显示基准点。</li>
                <li class="flex items-center gap-0.5"><svg class="w-3 h-3"><circle cx="6.500" cy="6" r="2.500" fill="#00f"/></svg>ACS1已经成功创建。</li>
                <li class="flex items-center gap-0.5"><svg class="w-3 h-3"><circle cx="6.500" cy="6" r="2.500" fill="#00f"/></svg>特征成功重定义。</li>
            </ul>
            <div class="w-4 flex flex-col items-center bg-[#f0f0f0]">
                <svg class="w-2 h-[5px] mt-[7px] rotate-180"><use href="#down"/></svg>
                <div class="w-3.5 h-2.5 mt-auto mb-3.5 border border-[#999] rounded-sm bg-[#ddd]"></div>
            </div>
        </div>

        <!-- 状态栏 -->
        <footer class="h-[26px] shrink-0 flex items-center justify-end gap-3 pr-9 bg-[#f0f0f0] font-['Liberation_Serif','Noto_Sans_CJK_SC',serif]">
            <p class="w-[86px] h-full pl-1 pt-0.5 border-l border-[#999]">已选取 1</p>
            <label class="relative w-[182px]">
                <select class="w-full h-[22px] appearance-none pl-1 border border-[#666] rounded-[3px] bg-[linear-gradient(180deg,#f4f4f4_45%,#d6d6d6_55%)]" aria-label="过滤器"><option>机构</option></select>
                <svg class="absolute right-1.5 top-2.5 w-2 h-[5px]"><use href="#down"/></svg>
            </label>
            <svg class="w-3 h-5"><path d="M4 1h4v11H4z" fill="#f6a0a0" stroke="#c66"/><circle cx="6" cy="14" r="4.500" fill="#1a3" stroke="#052"/><circle cx="5" cy="13" r="1.500" fill="#8f8"/></svg>
        </footer>
    </div>

    <!-- 测量定义对话框 -->
    <form class="absolute left-[653px] top-[369px] w-[301px] flex flex-col px-[5px] pb-[5px] rounded-md border border-[#1c2b33] ring-1 ring-inset ring-[#6fe0f8] bg-[linear-gradient(180deg,#c5e0f2_0%,#a6cfe6_30%,#2b84a6_31%,#1e7898_84%,#a9cdec_86%,#b5cdf0_100%)] shadow-[3px_5px_14px_rgba(0,0,0,0.75)] font-['Liberation_Serif','Noto_Sans_CJK_SC',serif]">
        <div class="h-6 flex items-start -mx-1 mt-px pl-2 pr-1.5 rounded-t bg-[linear-gradient(90deg,#7fb4d2_0%,#a8cee2_14%,#a5cbe0_26%,#e4f1fb_31%,#f3f9ff_60%,#d3e8f5_100%)]">
            <svg class="w-[13px] h-[13px] mt-1.5"><use href="#logo"/></svg>
            <h2 class="ml-1.5 leading-6 text-[#234]">测量定义</h2>
            <button type="button" class="ml-auto w-[42px] h-[17px] grid place-items-center rounded-b border border-[#5b1c14] bg-[linear-gradient(180deg,#e5a49a_0%,#cf6a5c_45%,#b02a18_50%,#cf5a40_100%)]" aria-label="关闭"><svg class="w-3 h-3"><path d="M2 2l8 8M10 2l-8 8" stroke="#433" stroke-width="4"/><path d="M2 2l8 8M10 2l-8 8" stroke="#fff" stroke-width="2.500"/></svg></button>
        </div>
        <div class="flex flex-col border border-[#3f5560] bg-[#f0f0f0]">
            <fieldset class="min-w-0 h-[42px] border border-[#d3dfe8] rounded-sm px-2 mx-px">
                <legend class="ml-1 px-1 leading-[14px]">名称</legend>
                <input class="w-full h-5 mt-px px-0.5 bg-white border border-[#c6cad0]" aria-label="名称" value="measure1">
            </fieldset>
            <fieldset class="min-w-0 h-11 border border-[#d3dfe8] rounded-sm px-2 mx-px">
                <legend class="ml-1 px-1 leading-[14px]">类型</legend>
                <div class="flex gap-0.5 mt-0.5">
                    <label class="relative w-[156px] shrink-0">
                        <select class="w-full h-[21px] appearance-none pl-1 border border-[#666] rounded-[3px] bg-[linear-gradient(180deg,#f4f4f4_45%,#d6d6d6_60%)]" aria-label="类型"><option>速度</option></select>
                        <svg class="absolute right-1.5 top-2.5 w-2 h-[5px]"><use href="#down"/></svg>
                    </label>
                    <input class="flex-1 w-0 min-w-0 h-5 px-0.5 border border-[#c6cad0]" aria-label="单位" value="mm / sec" readonly>
                </div>
            </fieldset>
            <fieldset class="min-w-0 h-11 border border-[#d3dfe8] rounded-sm px-2 mx-px">
                <legend class="ml-1 px-1 leading-[14px]">点或运动轴</legend>
                <div class="flex gap-0.5 mt-0.5">
                    <button type="button" class="w-7 h-5 grid place-items-center border border-[#666] rounded-sm bg-[linear-gradient(180deg,#f6f6f6_45%,#d6d6d6_60%)]" aria-label="选取点"><svg class="w-2.5 h-3.5"><use href="#cursor"/></svg></button>
                    <input class="flex-1 w-0 min-w-0 h-5 px-0.5 border border-[#c6cad0]" aria-label="点或运动轴" value="S1:PNT0" readonly>
                </div>
            </fieldset>
            <fieldset class="min-w-0 h-[43px] border border-[#d3dfe8] rounded-sm px-2 mx-px">
                <legend class="ml-1 px-1 leading-[14px]">坐标系</legend>
                <div class="flex gap-0.5 mt-0.5">
                    <button type="button" class="w-7 h-5 grid place-items-center border border-[#666] rounded-sm bg-[linear-gradient(180deg,#f6f6f6_45%,#d6d6d6_60%)]" aria-label="选取坐标系"><svg class="w-2.5 h-3.5"><use href="#cursor"/></svg></button>
                    <input class="flex-1 w-0 min-w-0 h-5 px-0.5 border border-[#c6cad0]" aria-label="坐标系" value="WCS" readonly>
                </div>
            </fieldset>
            <fieldset class="min-w-0 h-[46px] border border-[#d3dfe8] rounded-sm px-2 mx-px">
                <legend class="ml-1 px-1 leading-[14px]">分量</legend>
                <label class="relative block mt-1">
                    <select class="w-full h-[22px] appearance-none pl-1 border border-[#666] rounded-[3px] bg-[linear-gradient(180deg,#f4f4f4_45%,#d6d6d6_60%)]" aria-label="分量"><option>模</option></select>
                    <svg class="absolute right-1.5 top-3 w-2 h-[5px]"><use href="#down"/></svg>
                </label>
            </fieldset>
            <fieldset class="min-w-0 h-[53px] border border-[#d3dfe8] rounded-sm px-2 mx-px">
                <legend class="ml-1 px-1 leading-[14px]">评估方法</legend>
                <label class="relative block mt-1.5">
                    <select class="w-full h-[22px] appearance-none pl-1 border border-[#666] rounded-[3px] bg-[linear-gradient(180deg,#f4f4f4_45%,#d6d6d6_60%)]" aria-label="评估方法"><option>每个时间步长</option></select>
                    <svg class="absolute right-1.5 top-3 w-2 h-[5px]"><use href="#down"/></svg>
                </label>
            </fieldset>
            <div class="flex justify-end gap-1 pt-1.5 pb-[5px] pr-0.5 text-[#300]">
                <button type="button" class="w-[54px] h-[18px] mr-0.5 leading-4 border border-[#666] rounded-[3px] bg-[linear-gradient(180deg,#f6f6f6_45%,#d6d6d6_60%)]">确定</button>
                <button type="button" class="w-[38px] h-[18px] leading-4 border border-[#666] rounded-[3px] bg-[linear-gradient(180deg,#f6f6f6_45%,#d6d6d6_60%)]">应用</button>
                <button type="button" class="w-[38px] h-[18px] leading-4 border border-[#666] rounded-[3px] bg-[linear-gradient(180deg,#f6f6f6_45%,#d6d6d6_60%)]">取消</button>
            </div>
        </div>
    </form>

    <!-- 批注与水印 -->
    <svg class="absolute inset-0 w-full h-full pointer-events-none" viewBox="0 0 1000 767" preserveAspectRatio="xMinYMin">
        <g class="drop-shadow-[4px_4px_2px_rgba(0,0,0,0.35)]" fill="none" stroke="#ff9a00" stroke-width="3">
            <path d="M570 482C552 445 523 405 523 366C523 338 545 310 562 284M594 487Q630 484 668 487M761 429Q732 429 712 442"/>
            <path d="M569 271l2 18-15-5zM682 487l-17-7 2 14zM702 447l10-14 6 13z" fill="#ff9a00" stroke="none"/>
        </g>
        <g font-family="Liberation Mono, Noto Sans CJK SC" font-size="16">
            <text x="766" y="439" fill="#ff0000">1.选择测量类型</text>
            <text x="521" y="505" fill="#e00010">2.点选运动点</text>
        </g>
        <g fill="#1ab2e8" font-family="DejaVu Sans, Noto Sans CJK SC">
            <text x="900" y="740" font-size="30" font-weight="bold">三维网</text>
            <text x="900" y="756" font-size="15">3Dportal.cn</text>
        </g>
    </svg>

    <script>
        // 模型树节点
        const nodes = [
            { icon: 'plane', name: 'ASM_RIGHT' },
            { icon: 'plane', name: 'ASM_TOP' },
            { icon: 'plane', name: 'ASM_FRONT' },
            { icon: 'csys', name: 'ASM_DEF_CSYS' },
            { icon: 'cube', name: 'FIX.PRT', open: true },
            { icon: 'cube', name: 'S1.PRT', open: true, packed: true },
            { icon: 'cube', name: 'S1.PRT', open: true, packed: true },
            { icon: 'cube', name: 'T1.PRT', open: true, packed: true },
            { icon: 'cube', name: 'T2.PRT', open: true, packed: true },
            { icon: 'cube', name: 'T4.PRT', open: true, packed: true },
            { icon: 'cube', name: 'T3.PRT', open: true, packed: true },
            { icon: 'cube', name: 'T5.PRT', open: true, packed: true },
            { icon: 'cube', name: '组TRACE3D_1', open: true },
        ];
        const size = { plane: 'w-4 h-3', csys: 'w-[18px] h-4', cube: 'w-3.5 h-[13px]' };

        document.getElementById('tree').innerHTML = nodes.map(n => `
            <li class="flex items-center h-[18px] first:-mt-[11px] pl-1.5 leading-[18px] whitespace-nowrap">
                <svg class="w-[13px] h-[18px] shrink-0"><path d="M4.500 0v18M5 9.500h8" stroke="#999" stroke-dasharray="1 1"/>${n.open ? '<use href="#plus" x="0" y="5" width="9" height="9"/>' : ''}</svg>
                <span class="w-[22px] shrink-0 grid place-items-center"><svg class="${size[n.icon]}"><use href="#${n.icon}"/></svg></span>
                ${n.packed ? '<svg class="w-[7px] h-2 mb-1.5 shrink-0"><path d="M1.500.5h4v6h-4z" fill="none" stroke="#111"/><path d="M3 3h1v1h-1z"/></svg>' : ''}
                <span>${n.name}</span>
            </li>`).join('');
    </script>
</body>
</html>
